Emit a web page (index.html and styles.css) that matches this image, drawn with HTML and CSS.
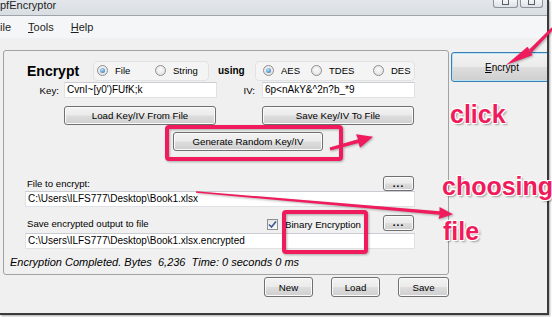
FILE: index.html
```html
<!DOCTYPE html>
<html lang="en">
<head>
<meta charset="UTF-8">
<title>pfEncryptor</title>
<link rel="stylesheet" href="styles.css">
</head>
<body>
<div class="window">
  <div class="titlebar">
    <span class="title">pfEncryptor</span>
    <div class="caption-btns">
      <span class="cbtn cbtn-min"><i></i></span>
      <span class="cbtn cbtn-max"><i></i></span>
    </div>
  </div>
  <div class="menubar">
    <span class="menu">ile</span>
    <span class="menu"><u>T</u>ools</span>
    <span class="menu"><u>H</u>elp</span>
  </div>
  <div class="client">
    <div class="main">
      <div class="group">
        <div class="row row-mode">
          <span class="heading">Encrypt</span>
          <div class="radio-panel panel-type">
            <span class="radio on w-file"><span class="dot"></span>File</span>
            <span class="radio"><span class="dot"></span>String</span>
          </div>
          <span class="using">using</span>
          <div class="radio-panel panel-alg">
            <span class="radio on w-aes"><span class="dot"></span>AES</span>
            <span class="radio w-tdes"><span class="dot"></span>TDES</span>
            <span class="radio"><span class="dot"></span>DES</span>
          </div>
        </div>
        <div class="row row-key">
          <span class="lbl lbl-key">Key:</span>
          <span class="textbox tb-key">CvnI~[y0')FUfK;k</span>
          <span class="lbl lbl-iv">IV:</span>
          <span class="textbox tb-key">6p&lt;nAkY&amp;^2n?b_*9</span>
        </div>
        <div class="row row-keybtns">
          <button class="btn btn-load">Load Key/IV From File</button>
          <button class="btn btn-save">Save Key/IV To File</button>
        </div>
        <div class="row row-gen">
          <button class="btn btn-gen">Generate Random Key/IV</button>
        </div>
        <div class="row row-label">
          <span class="caption">File to encrypt:</span>
          <button class="btn btn-dots">...</button>
        </div>
        <div class="row">
          <span class="textbox tb-path">C:\Users\ILFS777\Desktop\Book1.xlsx</span>
        </div>
        <div class="row row-out">
          <span class="caption cap-out">Save encrypted output to file</span>
          <span class="check"><svg width="9" height="9" viewBox="0 0 9 9"><path d="M1 4.5 L3.5 7 L8 1.5" fill="none" stroke="#3d5a98" stroke-width="1.6"/></svg></span>
          <span class="check-label">Binary Encryption</span>
          <button class="btn btn-dots">...</button>
        </div>
        <div class="row row-outpath">
          <span class="textbox tb-path">C:\Users\ILFS777\Desktop\Book1.xlsx.encrypted</span>
        </div>
        <div class="row row-status">
          <span class="status">Encryption Completed. Bytes  6,236  Time: 0 seconds 0 ms</span>
        </div>
      </div>
      <div class="actions">
        <button class="btn btn-act">New</button>
        <button class="btn btn-act">Load</button>
        <button class="btn btn-act btn-wide">Save</button>
      </div>
    </div>
    <div class="side">
      <button class="btn btn-encrypt"><u>E</u>ncrypt</button>
    </div>
  </div>
</div>

<svg class="marks" width="552" height="317" viewBox="0 0 552 317">
  <g fill="#ef1b5c" stroke="none">
    <rect x="167" y="127" width="174" height="32" rx="2" fill="none" stroke="#ef1b5c" stroke-width="4"/>
    <rect x="284" y="212" width="82" height="40" rx="2" fill="none" stroke="#ef1b5c" stroke-width="4"/>
    <polygon points="329.6,147.6 358,139.2 356,134.3 373,136.7 360,147.7 358.4,142.9 330.4,150.4"/>
    <polygon points="196,191.2 439.5,211.3 439.5,207 453,214.2 438.5,219 439.5,214.8 196,192.8"/>
    <polygon points="506,65 527.5,46.7 532.5,55.3"/>
    <polygon points="529,49.8 551.5,27.5 553.5,29.5 531.5,52.5"/>
  </g>
</svg>
<span class="note note-click">click</span>
<span class="note note-choosing">choosing</span>
<span class="note note-file">file</span>
</body>
</html>
```

FILE: styles.css
```css
* {
    box-sizing: border-box;
}
body {
    margin: 0;
    width: 552px;
    height: 317px;
    overflow: hidden;
    position: relative;
    background: #ffffff;
    font-family: "Liberation Sans", Arial, sans-serif;
    font-size: 9.7px;
    color: #000000;
}
.window {
    width: 549px;
    height: 315px;
    display: flex;
    flex-direction: column;
    background: #f0f0f0;
    border-right: 2px solid #3b3b3b;
    border-bottom: 2px solid #3b3b3b;
    box-shadow: 1px 1px 2px rgba(0, 0, 0, 0.35);
    overflow: hidden;
}
.titlebar {
    height: 16px;
    display: flex;
    align-items: flex-start;
    background: linear-gradient(to bottom, #e3e7eb, #d9dee3);
    border-bottom: 1px solid #9ea4aa;
}
.title {
    font-size: 11px;
    line-height: 12px;
    margin-top: -1px;
    color: #1e1e1e;
}
.caption-btns {
    margin-left: auto;
    margin-right: 4px;
    display: flex;
    gap: 2px;
}
.cbtn {
    height: 8px;
    border: 1px solid #8d9298;
    border-top: none;
    border-radius: 0 0 3px 3px;
    background: linear-gradient(to bottom, #f3f5f7, #dde2e7);
    display: flex;
    justify-content: center;
}
.cbtn-min {
    width: 25px;
}
.cbtn-max {
    width: 23px;
}
.cbtn i {
    width: 7px;
    height: 5px;
    border: 1px solid #5a5f66;
    border-top: none;
}
.menubar {
    height: 22px;
    display: flex;
    align-items: center;
    gap: 17px;
    font-size: 11px;
    background: #f5f6f7;
    color: #1e1e1e;
}
.client {
    flex: 1;
    display: flex;
}
.main {
    width: 449px;
    padding: 12px 0 0 3px;
    display: flex;
    flex-direction: column;
}
.side {
    flex: 1;
    padding: 14px 0 0 2px;
    overflow: hidden;
}
.group {
    width: 446px;
    height: 225px;
    border: 1px solid #a2a2a2;
    border-radius: 3px;
    display: flex;
    flex-direction: column;
}
.row {
    display: flex;
    align-items: center;
}
.row-mode {
    margin-top: 9px;
    height: 21px;
}
.heading {
    margin-left: 23px;
    width: 66px;
    font-size: 14px;
    font-weight: bold;
}
.radio-panel {
    height: 20px;
    display: flex;
    align-items: center;
    border: 1px solid #e2e2e2;
    border-radius: 4px;
    background: #f4f4f4;
}
.panel-type {
    width: 116px;
    padding-left: 3px;
}
.panel-alg {
    width: 160px;
    padding-left: 7px;
}
.using {
    margin-left: 9px;
    width: 37px;
    font-size: 10px;
    font-weight: bold;
}
.radio {
    display: flex;
    align-items: center;
    font-size: 9.5px;
}
.w-file {
    width: 58px;
}
.w-aes {
    width: 48px;
}
.w-tdes {
    width: 62px;
}
.dot {
    width: 11px;
    height: 11px;
    margin-right: 7px;
    border: 1px solid #8f8f8f;
    border-radius: 50%;
    background: radial-gradient(circle at 50% 40%, #fbfbfb, #dcdcdc);
    display: flex;
    align-items: center;
    justify-content: center;
}
.radio.on .dot::after {
    content: "";
    width: 5px;
    height: 5px;
    border-radius: 50%;
    background: radial-gradient(circle at 40% 35%, #b8e4ff, #1d67ad);
}
.row-key {
    margin-top: 1px;
    height: 16px;
}
.lbl {
    text-align: right;
}
.lbl-key {
    width: 60px;
    padding-right: 5px;
}
.lbl-iv {
    width: 45px;
    padding-right: 7px;
}
.textbox {
    height: 16px;
    line-height: 14px;
    padding-left: 2px;
    background: #ffffff;
    border: 1px solid #dfe1e5;
    border-top-color: #c9ccd1;
    font-size: 10px;
    white-space: nowrap;
    overflow: hidden;
}
.tb-key {
    width: 153px;
}
.tb-path {
    margin-left: 21px;
    width: 390px;
}
.btn {
    font-family: "Liberation Sans", Arial, sans-serif;
    font-size: 9.7px;
    color: #000000;
    padding: 0;
    border: 1px solid #707070;
    border-radius: 3px;
    background: linear-gradient(to bottom, #f3f3f3 0%, #ebebeb 48%, #dddddd 52%, #cfcfcf 100%);
    box-shadow: inset 0 0 0 1px #fbfbfb;
}
.row-keybtns {
    margin-top: 8px;
    height: 19px;
}
.btn-load,
.btn-save {
    width: 152px;
    height: 19px;
}
.btn-load {
    margin-left: 60px;
}
.btn-save {
    margin-left: 46px;
}
.row-gen {
    margin-top: 7px;
    height: 19px;
}
.btn-gen {
    margin-left: 169px;
    width: 150px;
    height: 19px;
}
.row-label {
    margin-top: 25px;
    height: 15px;
}
.caption {
    margin-left: 23px;
    font-size: 9.6px;
}
.btn-dots {
    margin-left: auto;
    margin-right: 34px;
    width: 31px;
    height: 15px;
    font-size: 10px;
    font-weight: bold;
    letter-spacing: 1px;
    line-height: 8px;
}
.row-out {
    margin-top: 8px;
    height: 16px;
}
.row-out .btn-dots {
    height: 16px;
}
.cap-out {
    width: 240px;
}
.check {
    width: 11px;
    height: 11px;
    margin-top: 3px;
    border: 1px solid #8e8f8f;
    background: linear-gradient(to bottom, #e6e6e6, #fafafa);
    display: flex;
    align-items: center;
    justify-content: center;
}
.check-label {
    margin-left: 7px;
    margin-top: 3px;
}
.row-outpath {
    margin-top: 2px;
}
.row-status {
    margin-top: 6px;
    height: 14px;
}
.status {
    margin-left: 6px;
    font-size: 11px;
    font-style: italic;
    white-space: pre;
}
.actions {
    margin-top: 2px;
    width: 446px;
    display: flex;
    justify-content: flex-end;
    gap: 18px;
}
.btn-act {
    width: 49px;
    height: 20px;
}
.btn-wide {
    width: 51px;
}
.btn-encrypt {
    width: 102px;
    height: 30px;
    font-size: 10px;
    border-color: #3c7fb1;
    box-shadow: inset 0 0 0 1px #b7e1f5;
}
.marks {
    position: absolute;
    left: 0;
    top: 0;
    pointer-events: none;
    filter: drop-shadow(1px 1px 1px rgba(0, 0, 0, 0.3));
}
.note {
    position: absolute;
    font-family: "Liberation Sans", Arial, sans-serif;
    font-size: 25px;
    font-weight: bold;
    line-height: 25px;
    color: #ef1b5c;
    white-space: nowrap;
    text-shadow: -1px -1px 0 #fff, 1px -1px 0 #fff, -1px 1px 0 #fff, 1px 1px 0 #fff, 2px 2px 2px rgba(0, 0, 0, 0.35);
}
.note-click {
    left: 450px;
    top: 102px;
}
.note-choosing {
    left: 442px;
    top: 174px;
}
.note-file {
    left: 443px;
    top: 219px;
}
```
